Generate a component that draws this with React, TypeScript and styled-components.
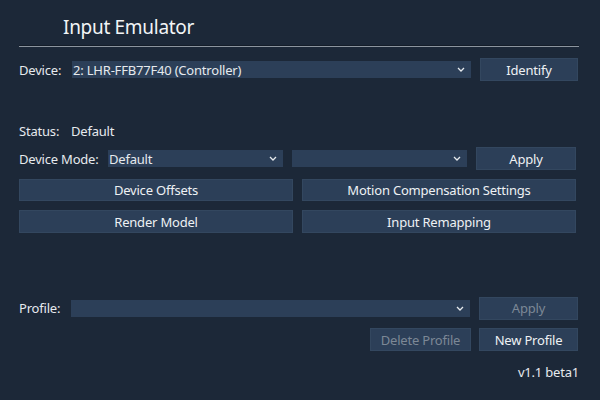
import styled, { createGlobalStyle } from 'styled-components';

const GlobalStyle = createGlobalStyle`
  html, body {
    margin: 0;
    padding: 0;
    background: #1c2838;
  }
  body {
    font-family: "Noto Sans", "Open Sans", sans-serif;
    font-size: 13px;
    letter-spacing: -0.2px;
    color: #e6eaee;
  }
`;

const Window = styled.div`
  width: 600px;
  height: 400px;
  box-sizing: border-box;
  padding: 0 21px 0 19px;
  background: #1c2838;
  display: flex;
  flex-direction: column;
`;

const Title = styled.h1`
  margin: 0;
  height: 46px;
  box-sizing: border-box;
  padding: 8px 0 0 44px;
  display: flex;
  align-items: center;
  font-size: 19px;
  font-weight: 400;
  letter-spacing: -0.3px;
  color: #f2f4f6;
`;

const Divider = styled.div`
  height: 1px;
  background: #8c959f;
  box-shadow: 0 -1px 0 #141d29;
`;

const Row = styled.div<{ $top: number; $height?: number }>`
  display: flex;
  align-items: center;
  margin-top: ${(p) => p.$top}px;
  height: ${(p) => p.$height ?? 23}px;
`;

const Label = styled.span<{ $width: number }>`
  width: ${(p) => p.$width}px;
  flex-shrink: 0;
  white-space: nowrap;
`;

const Value = styled.span`
  white-space: nowrap;
`;

const Combo = styled.div<{ $width: number }>`
  width: ${(p) => p.$width}px;
  height: 17px;
  box-sizing: border-box;
  background: #2c3f58;
  display: flex;
  align-items: center;
  padding: 0 6px 0 1px;
  flex-shrink: 0;
  white-space: nowrap;
`;

const ComboText = styled.span`
  flex: 1;
  overflow: hidden;
`;

const Button = styled.button<{ $width?: number; $disabled?: boolean }>`
  width: ${(p) => (p.$width ? `${p.$width}px` : 'auto')};
  height: 23px;
  box-sizing: border-box;
  background: #2c3f58;
  border: 1px solid #33475f;
  color: ${(p) => (p.$disabled ? '#7c8896' : '#eef1f4')};
  font-family: inherit;
  font-size: 13px;
  letter-spacing: inherit;
  padding: 0;
  flex-shrink: 0;
  cursor: default;
`;

const ButtonGrid = styled.div<{ $top: number }>`
  display: grid;
  grid-template-columns: 274px 274px;
  grid-template-rows: 22px 23px;
  column-gap: 9px;
  row-gap: 9px;
  margin-top: ${(p) => p.$top}px;
  & > ${Button} {
    height: 100%;
  }
`;

const Gap = styled.div<{ $w: number }>`
  width: ${(p) => p.$w}px;
  flex-shrink: 0;
`;

const RightRow = styled(Row)`
  justify-content: flex-end;
  padding-right: 1px;
`;

const Version = styled.div`
  margin-top: 12px;
  line-height: 18px;
  text-align: right;
`;

const Chevron = () => (
  <svg width="8" height="5" viewBox="0 0 8 5">
    <polyline points="1,1 4,4 7,1" fill="none" stroke="#e6eaee" strokeWidth="1.3" />
  </svg>
);

export default function App() {
  return (
    <>
      <GlobalStyle />
      <Window>
        <Title>Input Emulator</Title>
        <Divider />
        <Row $top={11}>
          <Label $width={53}>Device:</Label>
          <Combo $width={399}>
            <ComboText>2: LHR-FFB77F40 (Controller)</ComboText>
            <Chevron />
          </Combo>
          <Gap $w={9} />
          <Button $width={98}>Identify</Button>
        </Row>
        <Row $top={38}>
          <Label $width={52}>Status:</Label>
          <Value>Default</Value>
        </Row>
        <Row $top={5}>
          <Label $width={89}>Device Mode:</Label>
          <Combo $width={175}>
            <ComboText>Default</ComboText>
            <Chevron />
          </Combo>
          <Gap $w={9} />
          <Combo $width={175}>
            <ComboText />
            <Chevron />
          </Combo>
          <Gap $w={9} />
          <Button $width={100}>Apply</Button>
        </Row>
        <ButtonGrid $top={9}>
          <Button>Device Offsets</Button>
          <Button>Motion Compensation Settings</Button>
          <Button>Render Model</Button>
          <Button>Input Remapping</Button>
        </ButtonGrid>
        <Row $top={64} $height={22}>
          <Label $width={52}>Profile:</Label>
          <Combo $width={399}>
            <ComboText />
            <Chevron />
          </Combo>
          <Gap $w={9} />
          <Button $width={99} $disabled>Apply</Button>
        </Row>
        <RightRow $top={9}>
          <Button $width={101} $disabled>Delete Profile</Button>
          <Gap $w={8} />
          <Button $width={99}>New Profile</Button>
        </RightRow>
        <Version>v1.1 beta1</Version>
      </Window>
    </>
  );
}
